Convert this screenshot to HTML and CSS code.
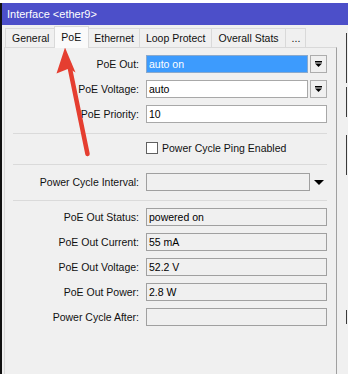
FILE: index.html
```html
<!DOCTYPE html>
<html>
<head>
<meta charset="utf-8">
<link rel="stylesheet" href="styles.css">
</head>
<body>
<div class="top"></div>
<div class="win">
  <div class="title">Interface &lt;ether9&gt;</div>
  <div class="body">
    <div class="main">
      <div class="tabs">
        <div class="tab gen">General</div>
        <div class="tab sel">PoE</div>
        <div class="tab eth">Ethernet</div>
        <div class="tab">Loop Protect</div>
        <div class="tab">Overall Stats</div>
        <div class="tab">...</div>
      </div>
      <div class="panel">
        <div class="row first">
          <div class="lbl">PoE Out:</div>
          <div class="fw">
            <div class="field hl">auto on</div>
            <div class="ddbtn"><svg width="7" height="6" viewBox="0 0 7 6"><rect x="0" y="0" width="7" height="1.5" fill="#000"/><polygon points="0,2.5 7,2.5 3.5,6" fill="#000"/></svg></div>
          </div>
        </div>
        <div class="row">
          <div class="lbl">PoE Voltage:</div>
          <div class="fw">
            <div class="field">auto</div>
            <div class="ddbtn"><svg width="7" height="6" viewBox="0 0 7 6"><rect x="0" y="0" width="7" height="1.5" fill="#000"/><polygon points="0,2.5 7,2.5 3.5,6" fill="#000"/></svg></div>
          </div>
        </div>
        <div class="row">
          <div class="lbl">PoE Priority:</div>
          <div class="fw">
            <div class="field">10</div>
          </div>
        </div>
        <div class="sep s1"></div>
        <div class="row cbrow">
          <div class="lbl"></div>
          <div class="cbwrap">
            <div class="cb"></div>
            <span>Power Cycle Ping Enabled</span>
          </div>
        </div>
        <div class="sep s2"></div>
        <div class="row introw">
          <div class="lbl">Power Cycle Interval:</div>
          <div class="fw nogap">
            <div class="field ro"></div>
            <div class="ddarrow"><div class="tri"></div></div>
          </div>
        </div>
        <div class="sep s3"></div>
        <div class="row strow">
          <div class="lbl">PoE Out Status:</div>
          <div class="fw"><div class="field ro">powered on</div></div>
        </div>
        <div class="row">
          <div class="lbl">PoE Out Current:</div>
          <div class="fw"><div class="field ro">55 mA</div></div>
        </div>
        <div class="row">
          <div class="lbl">PoE Out Voltage:</div>
          <div class="fw"><div class="field ro">52.2 V</div></div>
        </div>
        <div class="row">
          <div class="lbl">PoE Out Power:</div>
          <div class="fw"><div class="field ro">2.8 W</div></div>
        </div>
        <div class="row">
          <div class="lbl">Power Cycle After:</div>
          <div class="fw"><div class="field ro"></div></div>
        </div>
      </div>
    </div>
    <div class="side">
      <div class="seg g1"></div>
      <div class="seg g2"></div>
      <div class="seg g3"></div>
      <div class="seg g4"></div>
    </div>
  </div>
</div>
<svg class="arrow" width="348" height="374" viewBox="0 0 348 374">
  <line x1="69" y1="64" x2="87.5" y2="154" stroke="#e53e30" stroke-width="4.5" stroke-linecap="round"/>
  <polygon points="65,47.5 56.5,73.5 69,68.5 75.5,72.5" fill="#e53e30"/>
</svg>
</body>
</html>
```

FILE: styles.css
```css
html, body {
  margin: 0;
  padding: 0;
}
body {
  width: 348px;
  height: 374px;
  overflow: hidden;
  position: relative;
  background: #f0f0f0;
  font-family: "Liberation Sans", Arial, sans-serif;
  font-size: 10.5px;
  color: #111;
}
.top {
  height: 3px;
  background: #ffffff;
}
.win {
  border-left: 2px solid #111;
  height: 371px;
  display: flex;
  flex-direction: column;
}
.title {
  height: 22px;
  line-height: 22px;
  background: #4c4fc9;
  color: #fff;
  padding-left: 5px;
  font-size: 11px;
  flex: none;
}
.body {
  flex: 1;
  display: flex;
}
.main {
  width: 335px;
  padding-left: 2px;
  box-sizing: border-box;
  display: flex;
  flex-direction: column;
}
.tabs {
  height: 22px;
  display: flex;
  align-items: flex-end;
  padding-left: 1px;
  flex: none;
  position: relative;
  z-index: 2;
}
.tab {
  height: 19px;
  box-sizing: border-box;
  border: 1px solid #d9d9d9;
  border-bottom: none;
  border-right: none;
  padding: 0 6px;
  line-height: 18px;
  background: #f0f0f0;
  white-space: nowrap;
}
.tab.gen {
  padding: 0 5px 0 6px;
}
.tab.eth {
  padding: 0 5px;
}
.tab:last-child {
  border-right: 1px solid #d9d9d9;
  padding: 0 5px 0 6px;
}
.tab.sel {
  height: 22px;
  margin-bottom: -1px;
  background: #fafafa;
  border-right: 1px solid #d9d9d9;
  padding: 0 7px 0 6px;
  line-height: 20px;
}
.tab.sel + .tab {
  border-left: none;
}
.panel {
  flex: 1;
  border: 1px solid #d9d9d9;
  border-right-color: #a0a0a0;
  border-bottom: none;
  padding: 0 9px 0 0;
  display: flex;
  flex-direction: column;
}
.row {
  display: flex;
  align-items: center;
  height: 18px;
  gap: 7px;
  margin-top: 7px;
  flex: none;
}
.row.first {
  margin-top: 7px;
}
.lbl {
  width: 134px;
  flex: none;
  text-align: right;
  white-space: nowrap;
}
.fw {
  width: 181px;
  height: 18px;
  display: flex;
  gap: 2px;
  flex: none;
}
.fw.nogap {
  gap: 0;
}
.field {
  flex: 1;
  height: 18px;
  box-sizing: border-box;
  border: 1px solid #a8a8a8;
  background: #fff;
  padding-left: 2px;
  line-height: 16px;
  white-space: nowrap;
  color: #000;
}
.field.hl {
  background: #3d9bfd;
  border-color: #8aa9cc;
  color: #fff;
}
.field.ro {
  background: #f0f0f0;
  border-color: #a0a0a0;
}
.ddbtn {
  width: 17px;
  height: 18px;
  box-sizing: border-box;
  border: 1px solid #adadad;
  background: #f0f0f0;
  display: flex;
  align-items: center;
  justify-content: center;
  flex: none;
}
.ddarrow {
  width: 17px;
  height: 18px;
  display: flex;
  align-items: center;
  justify-content: center;
  flex: none;
}
.tri {
  width: 0;
  height: 0;
  border-left: 5px solid transparent;
  border-right: 5px solid transparent;
  border-top: 5px solid #000;
  margin-left: 1px;
}
.sep {
  height: 1px;
  background: #dadada;
  margin-left: 8px;
  flex: none;
}
.s1 { margin-top: 10px; }
.cbrow { margin-top: 5px; }
.s2 { margin-top: 7px; }
.introw { margin-top: 8px; }
.s3 { margin-top: 9px; }
.strow { margin-top: 7px; }
.cbwrap {
  display: flex;
  align-items: center;
  gap: 4px;
}
.cb {
  width: 12px;
  height: 12px;
  box-sizing: border-box;
  border: 1px solid #606060;
  background: #fff;
}
.side {
  flex: 1;
  position: relative;
  background: #f0f0f0;
}
.seg {
  position: absolute;
  left: 9px;
  width: 1px;
  background: #3a3a3a;
}
.g1 { top: 8px; height: 50px; }
.g2 { top: 62px; height: 30px; }
.g3 { top: 110px; height: 40px; }
.g4 { top: 285px; height: 14px; }
.arrow {
  position: absolute;
  left: 0;
  top: 0;
  pointer-events: none;
}
```
